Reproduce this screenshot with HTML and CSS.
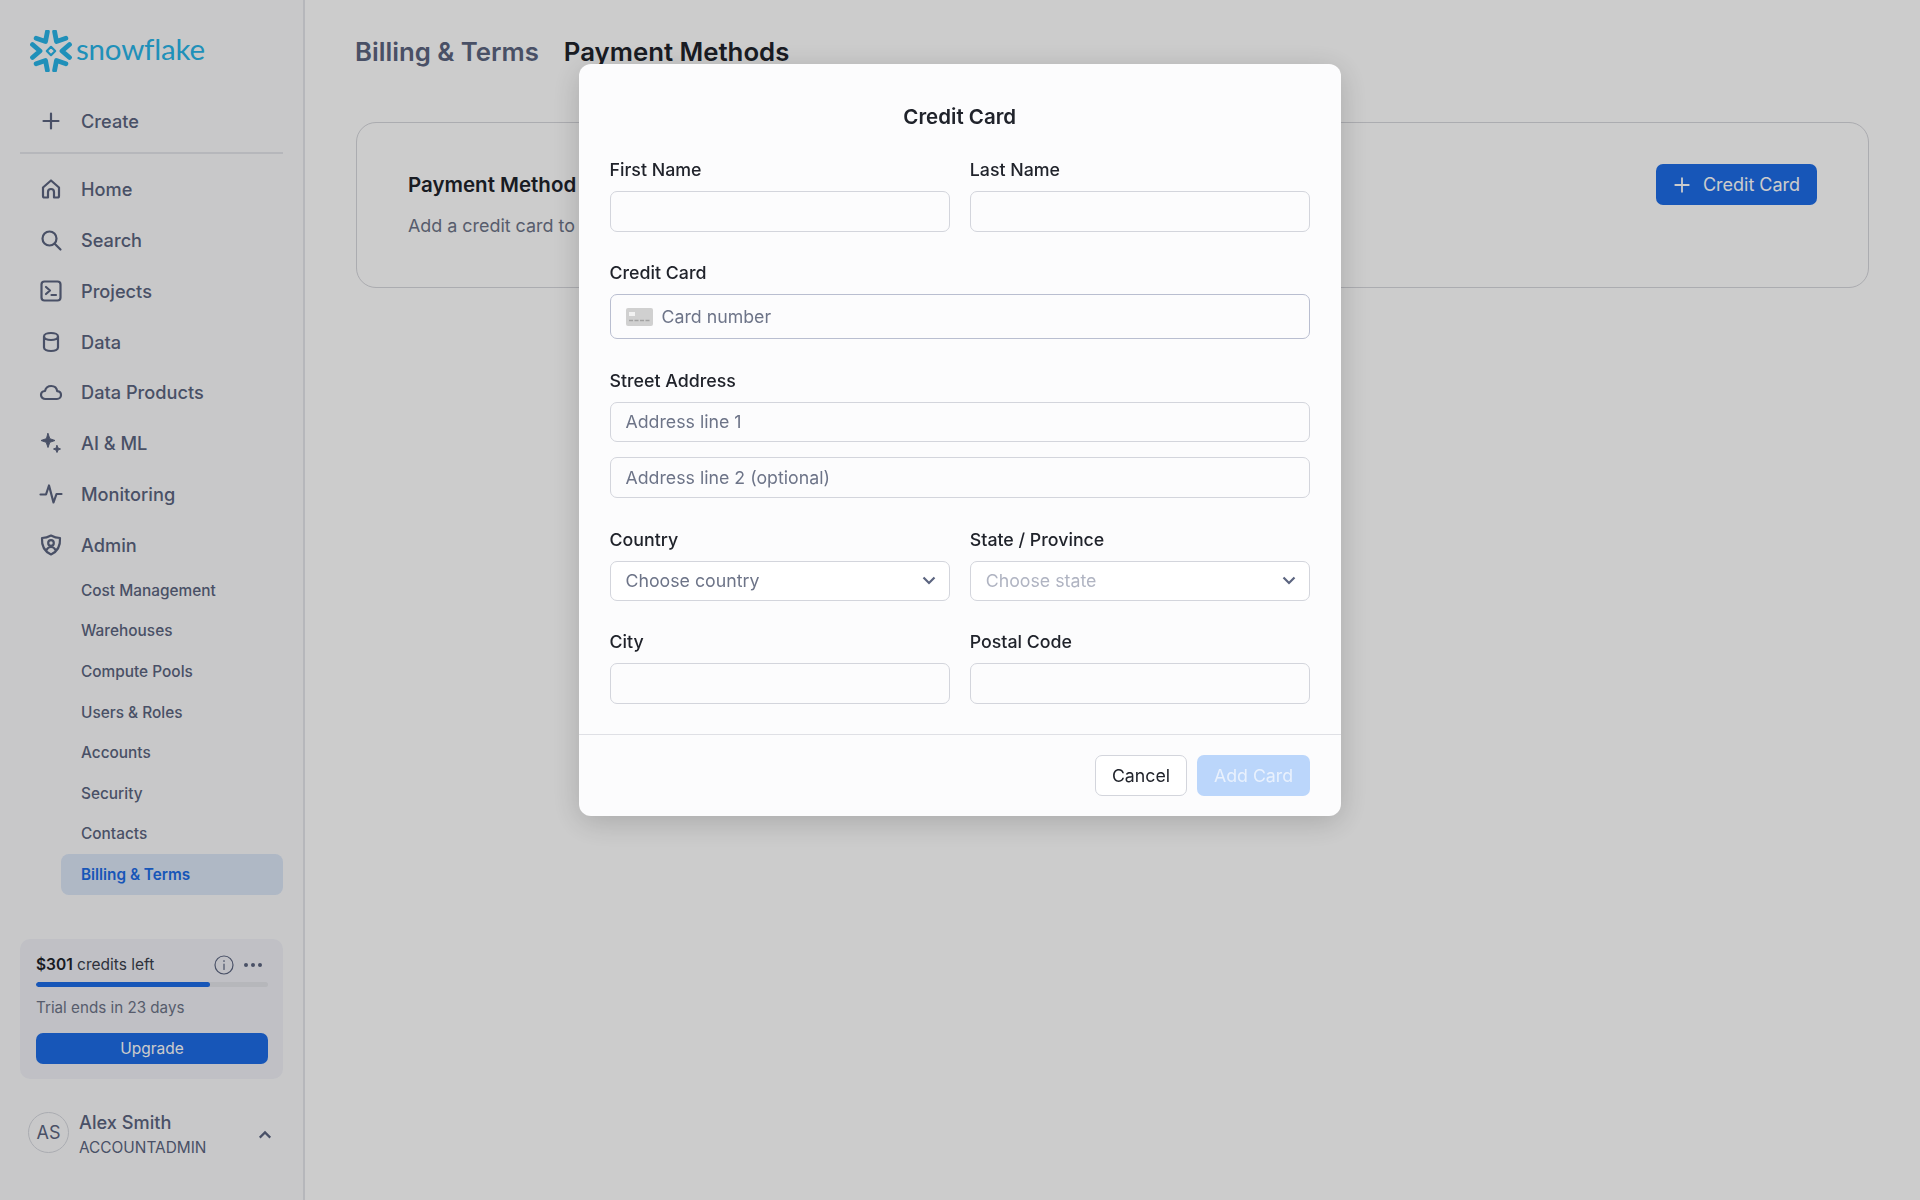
FILE: index.html
```html
<!doctype html>
<html lang="en">
  <head>
    <meta charset="UTF-8" />
    <meta name="viewport" content="width=device-width, initial-scale=1.0" />
    <title>Billing &amp; Terms</title>
    <link rel="stylesheet" href="styles.css">
  </head>
  <body>
    <!-- Sidebar -->
    <aside class="sidebar">
      <div class="logo">
        <svg class="logo-mark" viewBox="-21 -21 42 42" fill="none" stroke="#29b5e8" stroke-width="4.800" stroke-linejoin="round" stroke-linecap="round">
          <path d="M-18.500 -6.500 L-11 0 L-18.500 6.500" />
          <path d="M-18.500 -6.500 L-11 0 L-18.500 6.500" transform="rotate(60)" />
          <path d="M-18.500 -6.500 L-11 0 L-18.500 6.500" transform="rotate(120)" />
          <path d="M-18.500 -6.500 L-11 0 L-18.500 6.500" transform="rotate(180)" />
          <path d="M-18.500 -6.500 L-11 0 L-18.500 6.500" transform="rotate(240)" />
          <path d="M-18.500 -6.500 L-11 0 L-18.500 6.500" transform="rotate(300)" />
          <path d="M0 -4.200 L4.200 0 L0 4.200 L-4.200 0 Z" stroke-width="2.200" />
        </svg>
        <span class="logo-text">snowflake</span>
      </div>

      <a class="nav-item create">
        <svg class="icon" viewBox="0 0 24 24"><path d="M12 4.500v15M4.500 12h15" /></svg>
        Create
      </a>
      <div class="divider"></div>

      <nav class="nav">
        <a class="nav-item">
          <svg class="icon" viewBox="0 0 24 24"><path d="M4 10.500 12 3.500l8 7V19a1.500 1.500 0 0 1-1.500 1.500H15V15a3 3 0 0 0-6 0v5.500H5.500A1.500 1.500 0 0 1 4 19z" /></svg>
          Home
        </a>
        <a class="nav-item">
          <svg class="icon" viewBox="0 0 24 24"><circle cx="10.500" cy="10.500" r="7" /><path d="m15.500 15.500 6 6" /></svg>
          Search
        </a>
        <a class="nav-item">
          <svg class="icon" viewBox="0 0 24 24"><rect x="2.500" y="2.500" width="19" height="19" rx="3" /><path d="m7 8 4 3.500L7 15M12.500 16H17" /></svg>
          Projects
        </a>
        <a class="nav-item">
          <svg class="icon" viewBox="0 0 24 24"><path d="M5 6.500C5 4.500 8 3 12 3s7 1.500 7 3.500v11c0 2-3 3.500-7 3.500s-7-1.500-7-3.500zM5 6.500C5 8.500 8 10 12 10s7-1.500 7-3.500" /></svg>
          Data
        </a>
        <a class="nav-item">
          <svg class="icon" viewBox="0 0 24 24"><path d="M6.500 19C4 19 2 17.200 2 15s1.700-3.800 4-4c.7-3 3.200-5 6.200-5 3.200 0 5.600 2.200 6 5.200 2.200.2 3.800 1.800 3.800 3.800 0 2.200-1.800 4-4 4z" /></svg>
          Data Products
        </a>
        <a class="nav-item">
          <svg class="icon" viewBox="0 0 24 24"><path class="solid" d="M9 2.500l1.800 5.200L16 9.500l-5.200 1.800L9 16.500l-1.800-5.200L2 9.500l5.200-1.800zM18 14.500l1 2.500 2.500 1-2.500 1-1 2.500-1-2.500-2.500-1 2.500-1z" /></svg>
          AI &amp; ML
        </a>
        <a class="nav-item">
          <svg class="icon" viewBox="0 0 24 24"><path d="M1.500 12.500H7L10 3.500l4.500 17 3-8.500h5" /></svg>
          Monitoring
        </a>
        <a class="nav-item">
          <svg class="icon" viewBox="0 0 24 24"><path d="M12 2.500c3 1.600 6 2.400 9 2.500.5 7.500-2.500 13.500-9 16.500C5.500 18.500 2.500 12.500 3 5c3-.1 6-.9 9-2.500z" /><circle cx="12" cy="10" r="2.800" /><path d="M7.500 17c1-2 2.600-3 4.500-3s3.500 1 4.500 3" /></svg>
          Admin
        </a>
      </nav>

      <div class="subnav">
        <a class="sub-item">Cost Management</a>
        <a class="sub-item">Warehouses</a>
        <a class="sub-item">Compute Pools</a>
        <a class="sub-item">Users &amp; Roles</a>
        <a class="sub-item">Accounts</a>
        <a class="sub-item">Security</a>
        <a class="sub-item">Contacts</a>
        <a class="sub-item active">Billing &amp; Terms</a>
      </div>

      <div class="credits">
        <div class="credits-top">
          <span class="credits-text"><b>$301</b> credits left</span>
          <svg class="info" viewBox="0 0 20 20"><circle cx="10" cy="10" r="9" /><path d="M10 9v5.500M10 5.500v1" /></svg>
          <span class="dots"><i></i><i></i><i></i></span>
        </div>
        <div class="progress"><div class="progress-fill" style="width: 75%"></div></div>
        <div class="trial">Trial ends in 23 days</div>
        <button class="upgrade">Upgrade</button>
      </div>

      <div class="user">
        <div class="avatar">AS</div>
        <div class="user-info">
          <div class="user-name">Alex Smith</div>
          <div class="user-role">ACCOUNTADMIN</div>
        </div>
        <svg class="user-chevron" viewBox="0 0 16 10"><path d="M2 8l6-6 6 6" /></svg>
      </div>
    </aside>

    <!-- Main content -->
    <main class="main">
      <div class="tabs">
        <span class="tab">Billing &amp; Terms</span>
        <span class="tab current">Payment Methods</span>
      </div>
      <section class="panel">
        <div>
          <h2>Payment Method</h2>
          <p>Add a credit card to your account to continue after your trial</p>
        </div>
        <button class="add-card">
          <svg viewBox="0 0 20 20"><path d="M10 2.500v15M2.500 10h15" /></svg>
          Credit Card
        </button>
      </section>
    </main>

    <!-- Credit card dialog -->
    <div class="scrim">
      <div class="modal">
        <div class="modal-body">
          <h3>Credit Card</h3>
          <div class="row">
            <div class="field"><label>First Name</label><div class="input"></div></div>
            <div class="field"><label>Last Name</label><div class="input"></div></div>
          </div>
          <div class="field">
            <label>Credit Card</label>
            <div class="input card-input">
              <svg class="card-icon" viewBox="0 0 27 18">
                <rect width="27" height="18" rx="2" fill="#d0d0d0" />
                <rect x="3" y="4" width="6" height="4" fill="#f2f2f2" />
                <path d="M3 12.500h21" stroke="#a2a2a2" stroke-width="1.500" stroke-dasharray="4 1.500" />
              </svg>
              Card number
            </div>
          </div>
          <div class="field">
            <label>Street Address</label>
            <div class="input">Address line 1</div>
            <div class="input second">Address line 2 (optional)</div>
          </div>
          <div class="row">
            <div class="field">
              <label>Country</label>
              <div class="input select">Choose country
                <svg viewBox="0 0 14 9"><path d="M1.500 1.500 7 7l5.500-5.500" /></svg>
              </div>
            </div>
            <div class="field">
              <label>State / Province</label>
              <div class="input select disabled">Choose state
                <svg viewBox="0 0 14 9"><path d="M1.500 1.500 7 7l5.500-5.500" /></svg>
              </div>
            </div>
          </div>
          <div class="row">
            <div class="field"><label>City</label><div class="input"></div></div>
            <div class="field"><label>Postal Code</label><div class="input"></div></div>
          </div>
        </div>
        <div class="modal-footer">
          <button class="cancel">Cancel</button>
          <button class="submit">Add Card</button>
        </div>
      </div>
    </div>
  </body>
</html>
```

FILE: styles.css
```css
* {
  box-sizing: border-box;
}
body {
  font-family: Inter, "Liberation Sans", sans-serif;
  background-color: #fff;
  color: #20232b;
  display: flex;
  height: 1200px;
  margin: 0;
  overflow: hidden;
}
button {
  font-family: inherit;
  border: none;
}

/* Sidebar */
.sidebar {
  width: 305px;
  flex-shrink: 0;
  height: 100%;
  background-color: #fbfbfc;
  border-right: 2px solid #e4e5ea;
  padding: 0 20px;
  display: flex;
  flex-direction: column;
}
.logo {
  display: flex;
  align-items: center;
  height: 42px;
  margin: 30px 0 0 10px;
}
.logo-mark {
  width: 42px;
  height: 42px;
  flex-shrink: 0;
}
.logo-text {
  font-family: Lato, sans-serif;
  font-weight: 400;
  font-size: 29.500px;
  color: #29b5e8;
  margin-left: 4px;
  margin-top: -6px;
  letter-spacing: -0.2px;
}
.nav-item {
  display: flex;
  align-items: center;
  height: 50.750px;
  padding-left: 18px;
  font-size: 18.200px;
  font-weight: 500;
  color: #5c6580;
}
.nav-item.create {
  margin-top: 24px;
  height: 50px;
}
.icon {
  width: 24px;
  height: 24px;
  margin-right: 18.500px;
  margin-left: 0.500px;
  fill: none;
  stroke: #5c6580;
  stroke-width: 2.200;
  stroke-linecap: round;
  stroke-linejoin: round;
}
.icon .solid {
  fill: #5c6580;
  stroke-width: 1;
}
.divider {
  height: 2px;
  background-color: #e4e5ea;
  margin-top: 6px;
  margin-bottom: 10px;
}
.subnav {
  margin-left: 41px;
}
.sub-item {
  display: flex;
  align-items: center;
  height: 40.600px;
  padding-left: 20px;
  font-size: 15.400px;
  font-weight: 500;
  color: #5c6580;
}
.sub-item.active {
  background-color: #dbe6f7;
  color: #1d6ce6;
  border-radius: 8px;
  font-size: 15.300px;
  font-weight: 600;
}
.credits {
  background-color: #f0f1f7;
  border-radius: 10px;
  margin-top: 44px;
  height: 140px;
  padding: 15px 15px 15px 16px;
}
.credits-top {
  display: flex;
  align-items: center;
  font-size: 15.500px;
  height: 22px;
  color: #3a3e4b;
}
.credits-text {
  flex: 1;
}
.credits-text b {
  font-weight: 600;
  color: #20232b;
}
.info {
  width: 20px;
  height: 20px;
  fill: none;
  stroke: #5c6580;
  stroke-width: 1.200;
  stroke-linecap: round;
}
.dots {
  display: flex;
  gap: 3px;
  margin-left: 10px;
  margin-right: 6px;
}
.dots i {
  width: 4px;
  height: 4px;
  border-radius: 50%;
  background-color: #5c6580;
}
.progress {
  height: 5px;
  background-color: #e4e5ea;
  border-radius: 3px;
  margin-top: 6px;
  overflow: hidden;
}
.progress-fill {
  height: 100%;
  background-color: #1d6ce6;
  border-radius: 3px;
}
.trial {
  font-size: 15.200px;
  color: #6d7488;
  margin-top: 11px;
}
.upgrade {
  display: block;
  width: 100%;
  height: 31px;
  margin-top: 16px;
  background-color: #1d6ce6;
  color: #fff;
  font-size: 15.500px;
  font-weight: 400;
  border-radius: 7px;
}
.user {
  display: flex;
  align-items: center;
  margin-top: 33px;
  padding-left: 8px;
  height: 42px;
}
.avatar {
  width: 41px;
  height: 41px;
  border: 1px solid #d5d7de;
  border-radius: 50%;
  display: flex;
  align-items: center;
  justify-content: center;
  font-size: 18px;
  color: #5c6580;
}
.user-info {
  flex: 1;
  margin-left: 10px;
  padding-top: 5px;
}
.user-name {
  font-size: 18.200px;
  font-weight: 500;
  color: #5c6580;
  line-height: 25px;
}
.user-role {
  font-size: 15.400px;
  color: #5c6580;
  line-height: 25px;
}
.user-chevron {
  width: 14px;
  height: 10px;
  margin-right: 11px;
  margin-top: 4px;
  fill: none;
  stroke: #5c6580;
  stroke-width: 2.500;
}

/* Main */
.main {
  flex: 1;
  padding: 35px 51px 0;
}
.tabs {
  display: flex;
  gap: 25px;
  margin-left: -1px;
  font-size: 25.750px;
  font-weight: 600;
  line-height: 34px;
}
.tab {
  color: #5c6580;
}
.tab.current {
  color: #20232b;
}
.panel {
  display: flex;
  justify-content: space-between;
  align-items: flex-start;
  height: 166px;
  margin-top: 53px;
  padding: 41px 51px;
  border: 1px solid #d6d7dc;
  border-radius: 20px;
}
.panel h2 {
  margin: 9px 0 0;
  font-size: 20.500px;
  font-weight: 600;
  line-height: 24px;
}
.panel p {
  margin: 17px 0 0;
  font-size: 17.900px;
  line-height: 24px;
  color: #6d7488;
}
.add-card {
  display: flex;
  align-items: center;
  justify-content: center;
  gap: 12px;
  width: 161px;
  height: 41px;
  background-color: #1d6ce6;
  color: #fff;
  font-size: 18px;
  border-radius: 7px;
}
.add-card svg {
  width: 18px;
  height: 18px;
  fill: none;
  stroke: #fff;
  stroke-width: 2;
  stroke-linecap: round;
}

/* Dialog */
.scrim {
  position: fixed;
  top: 0;
  left: 0;
  width: 100%;
  height: 100%;
  background-color: rgba(0, 0, 0, 0.2);
  display: flex;
  justify-content: center;
  align-items: flex-start;
  padding-top: 64px;
}
.modal {
  width: 762px;
  height: 752px;
  background-color: #fcfcfd;
  border-radius: 12px;
  box-shadow: 0 6px 30px rgba(0, 0, 0, 0.18);
}
.modal-body {
  height: 671px;
  padding: 41px 31px 0 30.500px;
  border-bottom: 1px solid #dfe0e5;
}
.modal-body h3 {
  margin: 0 0 29px;
  font-size: 20.500px;
  font-weight: 600;
  line-height: 24px;
  text-align: center;
}
.row {
  display: flex;
  gap: 20px;
}
.row .field {
  flex: 1;
  min-width: 0;
}
.field label {
  display: block;
  font-size: 17.800px;
  font-weight: 500;
  line-height: 24px;
  margin-bottom: 9px;
}
.input {
  display: flex;
  align-items: center;
  height: 40.500px;
  padding: 0 15px;
  border: 1px solid #d3d5dc;
  border-radius: 7px;
  font-size: 17.750px;
  color: #6d7488;
}
.modal-body > .row + .field,
.modal-body > .field + .field {
  margin-top: 29.500px;
}
.modal-body > .field + .row {
  margin-top: 30px;
}
.modal-body > .row + .row {
  margin-top: 29px;
}
.card-input {
  height: 45px;
  border-color: #b9bed0;
}
.card-icon {
  width: 27px;
  height: 18px;
  margin-right: 9px;
}
.input.second {
  margin-top: 15px;
}
.select {
  justify-content: space-between;
  padding-right: 13px;
  background-color: #fff;
}
.select svg {
  width: 14px;
  height: 9px;
  fill: none;
  stroke: #5c6580;
  stroke-width: 2.200;
}
.select.disabled {
  color: #b0b4c2;
}
.modal-footer {
  display: flex;
  justify-content: flex-end;
  gap: 10px;
  padding: 20px 31px 0;
}
.modal-footer button {
  height: 41px;
  font-size: 17.750px;
  border-radius: 7px;
}
.cancel {
  width: 92px;
  background-color: #fff;
  border: 1px solid #d3d5dc;
  color: #20232b;
}
.submit {
  width: 113px;
  background-color: #bbd6fb;
  color: #e9f1fd;
}
```
